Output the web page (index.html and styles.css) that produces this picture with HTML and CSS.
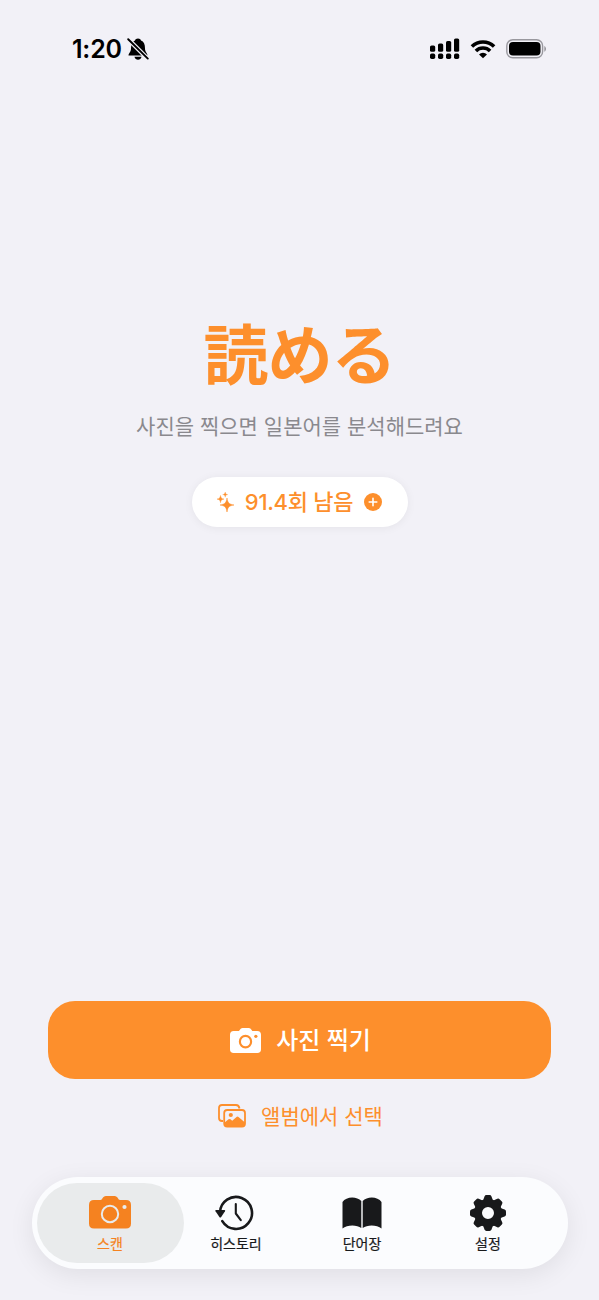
FILE: index.html
```html
<!DOCTYPE html>
<html lang="ko">
<head>
<meta charset="utf-8">
<title>読める</title>
<link rel="stylesheet" href="styles.css">
</head>
<body>
<div class="screen">
  <header class="status">
    <div class="status-left">
      <span class="time">1:20</span>
      <svg class="bell" viewBox="0 0 22 22" width="22" height="22">
        <path d="M1.500 17.600C1.500 15 4 14.200 4 10.500C4 6 5.500 3.500 8 2.500C8.300 -0.300 13.700 -0.300 14 2.500C16.800 3.500 18 6 18 10.500C18 14.200 20.500 15 20.500 17.600Z" fill="#000"/>
        <path d="M7.500 18.800H14.500C14 22.600 8 22.600 7.500 18.800Z" fill="#000"/>
        <path d="M0 0L22 22" stroke="#f2f1f7" stroke-width="4.400"/>
        <path d="M1.200 1.200L20.800 20.600" stroke="#000" stroke-width="1.900" stroke-linecap="round"/>
      </svg>
    </div>
    <div class="status-right">
      <svg viewBox="0 0 30 22" width="30" height="22">
        <g fill="#000">
          <rect x="0" y="7.500" width="5.200" height="6.300" rx="1.600"/>
          <rect x="8" y="5.500" width="5.200" height="8.300" rx="1.600"/>
          <rect x="16" y="3" width="5.200" height="10.800" rx="1.600"/>
          <rect x="24" y="0.500" width="5.200" height="13.300" rx="1.600"/>
          <rect x="0" y="15.500" width="5.200" height="5.500" rx="1.700"/>
          <rect x="8" y="15.500" width="5.200" height="5.500" rx="1.700"/>
          <rect x="16" y="15.500" width="5.200" height="5.500" rx="1.700"/>
          <rect x="24" y="15.500" width="5.200" height="5.500" rx="1.700"/>
        </g>
      </svg>
      <svg class="wifi" viewBox="0 0 26 20" width="26" height="20">
        <g fill="none" stroke="#000" stroke-width="3.600">
          <path d="M1.900 7.500A16 16 0 0 1 24.100 7.500"/>
          <path d="M5.900 11.900A10 10 0 0 1 20.100 11.900"/>
        </g>
        <path d="M9 15.400A5.800 5.800 0 0 1 17 15.400L13 19.300Z" fill="#000"/>
      </svg>
      <svg class="battery" viewBox="0 0 41 20" width="41" height="20">
        <rect x="0.800" y="0.800" width="35.800" height="18" rx="6" fill="none" stroke="#99989e" stroke-width="1.400"/>
        <rect x="3" y="3" width="31.500" height="13.600" rx="4" fill="#000"/>
        <path d="M38.300 7C40.600 8 40.600 11.800 38.300 12.800Z" fill="#99989e"/>
      </svg>
    </div>
  </header>

  <main class="hero">
    <h1 class="title" lang="ja">読める</h1>
    <p class="subtitle">사진을 찍으면 일본어를 분석해드려요</p>
    <div class="credits">
      <svg class="sparkles" viewBox="0 0 17 20" width="17" height="20" fill="#fd8f2c">
        <path d="M10 6C10.700 10.800 12 12.200 17 13C12 13.800 10.700 15.200 10 20C9.300 15.200 8 13.800 3 13C8 12.200 9.300 10.800 10 6Z" stroke="#fd8f2c" stroke-width="0.500"/>
        <path d="M3.500 3.500C3.900 6 4.500 6.700 7 7.100C4.500 7.500 3.900 8.200 3.500 10.700C3.100 8.200 2.500 7.500 0 7.100C2.500 6.700 3.100 6 3.500 3.500Z" stroke="#fd8f2c" stroke-width="0.400"/>
        <path d="M8.200 0C8.500 1.800 8.900 2.300 10.700 2.600C8.900 2.900 8.500 3.400 8.200 5.200C7.900 3.400 7.500 2.900 5.700 2.600C7.500 2.300 7.900 1.800 8.200 0Z" stroke="#fd8f2c" stroke-width="0.300"/>
      </svg>
      <span class="credits-text">91.4회 남음</span>
      <svg class="plus" viewBox="0 0 18 18" width="18" height="18">
        <circle cx="9" cy="9" r="9" fill="#fd8f2c"/>
        <path d="M9 5.200V12.800M5.200 9H12.800" stroke="#fff" stroke-width="1.600" stroke-linecap="round"/>
      </svg>
    </div>
  </main>

  <section class="actions">
    <button class="primary">
      <svg viewBox="0 0 42 33" width="31" height="25" preserveAspectRatio="none">
        <path d="M5 4H11.500C13.500 4 13.500 0 17 0H25.500C29 0 29 4 31 4H37Q42 4 42 9V28Q42 33 37 33H5Q0 33 0 28V9Q0 4 5 4Z" fill="#fff"/>
        <circle cx="21" cy="18" r="7.600" fill="none" stroke="#fd8f2c" stroke-width="2.900"/>
        <circle cx="35" cy="11" r="2.200" fill="#fd8f2c"/>
      </svg>
      <span class="primary-text">사진 찍기</span>
    </button>
    <button class="secondary">
      <svg viewBox="0 0 28 24" width="28" height="24">
        <path d="M5 17H4Q1 17 1 14V4Q1 1 4 1H18Q21 1 21.500 4.500" fill="none" stroke="#fd8f2c" stroke-width="1.800"/>
        <rect x="6.200" y="6" width="20.800" height="16.500" rx="3" fill="none" stroke="#fd8f2c" stroke-width="1.800"/>
        <path d="M6 19L10.500 15.300Q11.500 14.500 12.500 15.300L14.200 16.800L18.500 13Q19.500 12.200 20.500 13L27 18.500V20Q27 22.800 24 22.800H9Q6 22.800 6 20Z" fill="#fd8f2c"/>
        <circle cx="12.800" cy="11" r="2.100" fill="#fd8f2c"/>
      </svg>
      <span class="secondary-text">앨범에서 선택</span>
    </button>
  </section>

  <nav class="tabs">
    <a class="tab active">
      <svg viewBox="0 -1 42 36" width="42" height="36">
        <path d="M5 4H11.500C13.500 4 13.500 0 17 0H25.500C29 0 29 4 31 4H37Q42 4 42 9V27.500Q42 32.500 37 32.500H5Q0 32.500 0 27.500V9Q0 4 5 4Z" fill="#f58220"/>
        <circle cx="21" cy="18" r="8.200" fill="none" stroke="#e9ebec" stroke-width="2"/>
        <circle cx="35.500" cy="11" r="2.100" fill="#e9ebec"/>
      </svg>
      <span class="label">스캔</span>
    </a>
    <a class="tab">
      <svg class="history" viewBox="0.500 0 42 36" width="42" height="36">
        <path d="M5.500 17.500A16 16 0 1 1 7.800 26.200" fill="none" stroke="#18191b" stroke-width="2.600" stroke-linecap="round"/>
        <path d="M1.500 15H9.900Q11.100 15 10.500 16.200L6.700 22Q5.800 23.200 4.900 22L1 16.200Q0.400 15 1.500 15Z" fill="#18191b"/>
        <path d="M21.300 9V18.500L26.300 25.200" fill="none" stroke="#18191b" stroke-width="2.100" stroke-linecap="round" stroke-linejoin="round"/>
      </svg>
      <span class="label">히스토리</span>
    </a>
    <a class="tab">
      <svg viewBox="0 -2 40 36" width="40" height="36">
        <path d="M0.500 5C4 -0.800 15 -1 19.300 4V31C15 27.500 5 27.500 0.500 31.500Z" fill="#18191b"/>
        <path d="M39.500 5C36 -0.800 25 -1 20.700 4V31C25 27.500 35 27.500 39.500 31.500Z" fill="#18191b"/>
      </svg>
      <span class="label">단어장</span>
    </a>
    <a class="tab">
      <svg viewBox="-18 -18 36 36" width="36" height="36">
        <g fill="#18191b">
          <path id="tooth" d="M-5.500 -11L-3.500 -16.600Q-3 -18 -1.600 -18H1.600Q3 -18 3.500 -16.600L5.500 -11Z"/>
          <use href="#tooth" transform="rotate(45)"/>
          <use href="#tooth" transform="rotate(90)"/>
          <use href="#tooth" transform="rotate(135)"/>
          <use href="#tooth" transform="rotate(180)"/>
          <use href="#tooth" transform="rotate(225)"/>
          <use href="#tooth" transform="rotate(270)"/>
          <use href="#tooth" transform="rotate(315)"/>
        </g>
        <circle r="10" fill="none" stroke="#18191b" stroke-width="8"/>
      </svg>
      <span class="label">설정</span>
    </a>
  </nav>
</div>
</body>
</html>
```
FILE: styles.css
```css
* { box-sizing: border-box; }

body {
  margin: 0;
  background: #f2f1f7;
  font-family: Inter, "Noto Sans CJK KR", sans-serif;
}

.screen {
  display: flex;
  flex-direction: column;
  width: 599px;
  height: 1300px;
  overflow: hidden;
}

.status {
  display: flex;
  justify-content: space-between;
  align-items: center;
  height: 96px;
  padding: 1px 52px 0 72px;
}

.status-left,
.status-right {
  display: flex;
  align-items: center;
}

.status-left { gap: 5px; }
.status-right { gap: 10px; }

.time {
  font-size: 25px;
  font-weight: 600;
  line-height: 30px;
  letter-spacing: -0.2px;
}

.hero {
  display: flex;
  flex-direction: column;
  align-items: center;
  height: 905px;
  padding-top: 210px;
}

.title {
  margin: 0;
  font-family: "Noto Sans CJK JP", sans-serif;
  font-size: 65px;
  font-weight: 700;
  line-height: 90px;
  letter-spacing: -1px;
  color: #fd8f2c;
}

.subtitle {
  margin: 14px 0 0;
  font-size: 21px;
  line-height: 34px;
  color: #8a898e;
  white-space: nowrap;
}

.credits {
  display: flex;
  align-items: center;
  justify-content: center;
  width: 216px;
  height: 50px;
  margin-top: 33px;
  gap: 11px;
  border-radius: 25px;
  background: #fff;
  box-shadow: 0 1px 10px rgba(0, 0, 0, 0.06);
}

.credits-text {
  font-size: 22px;
  font-weight: 500;
  line-height: 30px;
  letter-spacing: -0.3px;
  color: #fd8f2c;
  white-space: nowrap;
}

.actions {
  display: flex;
  flex-direction: column;
  align-items: center;
  height: 176px;
}

button {
  display: flex;
  align-items: center;
  justify-content: center;
  padding: 0;
  border: 0;
  background: none;
  font-family: inherit;
}

.primary {
  width: 503px;
  height: 78px;
  padding-left: 2px;
  gap: 15px;
  border-radius: 27px;
  background: #fd8f2c;
}

.primary-text {
  padding-bottom: 3px;
  font-size: 24px;
  font-weight: 500;
  color: #fff;
}

.secondary {
  height: 40px;
  margin-top: 17px;
  padding-left: 2px;
  gap: 15px;
}

.secondary-text {
  padding-bottom: 3px;
  font-size: 21px;
  color: #fd8f2c;
}

.tabs {
  display: grid;
  grid-template-columns: repeat(4, 1fr);
  width: 536px;
  height: 92px;
  margin-left: 32px;
  padding: 0 17px 0 15px;
  border-radius: 46px;
  background: #fbfcfe;
  box-shadow: 0 6px 26px rgba(0, 0, 0, 0.08);
}

.tab {
  position: relative;
  display: flex;
  flex-direction: column;
  align-items: center;
  justify-content: space-between;
  padding: 18px 0 15px;
  color: #18191b;
}

.tab svg {
  position: relative;
}

.tab.active { color: #f58220; }

.tab.active::before {
  content: "";
  position: absolute;
  inset: 6px -11px 6px -10px;
  border-radius: 40px;
  background: #e9ebec;
}

.label {
  position: relative;
  font-size: 14px;
  font-weight: 400;
  line-height: 20px;
  -webkit-text-stroke: 0.2px currentColor;
}
```
